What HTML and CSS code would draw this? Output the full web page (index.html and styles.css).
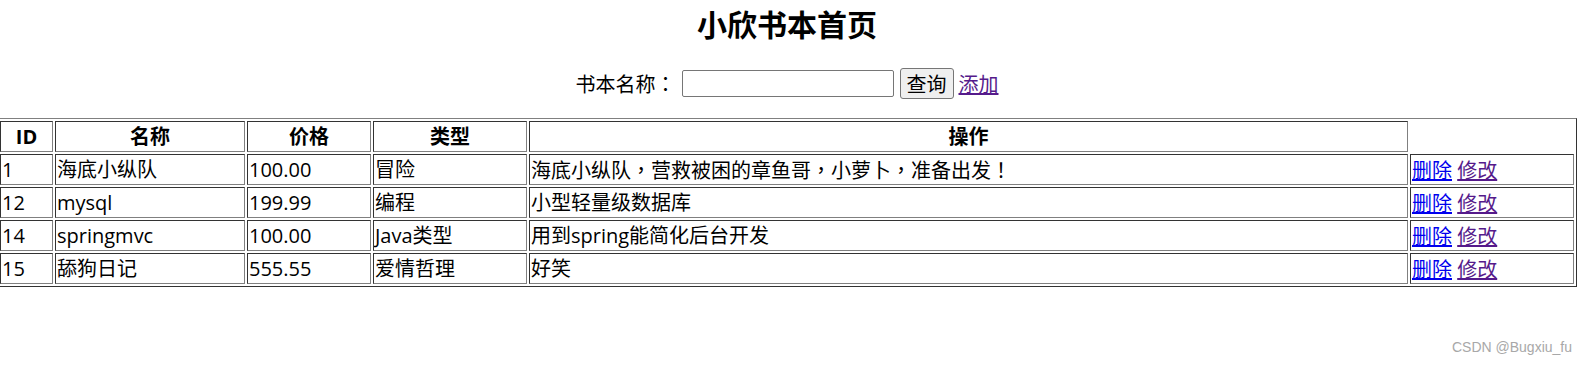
FILE: index.html
```html
<!DOCTYPE html>
<html lang="zh-CN">
<head>
<meta charset="utf-8">
<title>小欣书本首页</title>
<link rel="stylesheet" href="styles.css">
</head>
<body>
<div class="page">
  <h2 class="title">小欣书本首页</h2>
  <form class="search">
    <label class="search-label">书本名称<span class="punct" lang="zh-TW">：</span></label>
    <input class="search-input" type="text">
    <button class="search-btn" type="button">查询</button>
    <a class="link link-visited" href="#">添加</a>
  </form>
  <table class="books">
    <colgroup>
      <col class="c-id"><col class="c-name"><col class="c-price"><col class="c-type"><col class="c-desc"><col class="c-ops">
    </colgroup>
    <tr class="row">
      <th class="cell head">ID</th>
      <th class="cell head">名称</th>
      <th class="cell head">价格</th>
      <th class="cell head">类型</th>
      <th class="cell head">操作</th>
    </tr>
    <tr class="row">
      <td class="cell">1</td>
      <td class="cell">海底小纵队</td>
      <td class="cell">100.00</td>
      <td class="cell">冒险</td>
      <td class="cell">海底小纵队<span class="punct" lang="zh-TW">，</span>营救被困的章鱼哥<span class="punct" lang="zh-TW">，</span>小萝卜<span class="punct" lang="zh-TW">，</span>准备出发<span class="punct" lang="zh-TW">！</span></td>
      <td class="cell"><a class="link" href="#">删除</a> <a class="link link-visited" href="#">修改</a></td>
    </tr>
    <tr class="row">
      <td class="cell">12</td>
      <td class="cell">mysql</td>
      <td class="cell">199.99</td>
      <td class="cell">编程</td>
      <td class="cell">小型轻量级数据库</td>
      <td class="cell"><a class="link" href="#">删除</a> <a class="link link-visited" href="#">修改</a></td>
    </tr>
    <tr class="row">
      <td class="cell">14</td>
      <td class="cell">springmvc</td>
      <td class="cell">100.00</td>
      <td class="cell">Java类型</td>
      <td class="cell">用到spring能简化后台开发</td>
      <td class="cell"><a class="link" href="#">删除</a> <a class="link link-visited" href="#">修改</a></td>
    </tr>
    <tr class="row">
      <td class="cell">15</td>
      <td class="cell">舔狗日记</td>
      <td class="cell">555.55</td>
      <td class="cell">爱情哲理</td>
      <td class="cell">好笑</td>
      <td class="cell"><a class="link" href="#">删除</a> <a class="link link-visited" href="#">修改</a></td>
    </tr>
  </table>
</div>
<div class="watermark">CSDN @Bugxiu_fu</div>
</body>
</html>
```

FILE: styles.css
```css
html, body {
  margin: 0;
  padding: 0;
  background: #fff;
}
body {
  font-family: "Open Sans", "Noto Sans CJK SC", sans-serif;
  font-size: 20px;
  color: #000;
  overflow: hidden;
  height: 365px;
  position: relative;
}
.page {
  width: 1580px;
  margin-left: -3px;
}
.punct {
  font-family: "Noto Sans CJK TC", sans-serif;
}
.title {
  margin: 3px 0 0;
  font-size: 30px;
  line-height: 40px;
  font-weight: bold;
  text-align: center;
  font-family: "Noto Sans CJK SC", sans-serif;
}
.search {
  display: flex;
  justify-content: center;
  align-items: center;
  margin: 25px 0 0;
  height: 31px;
}
.search-label {
  width: 100px;
  line-height: 25px;
  white-space: nowrap;
  font-family: "Noto Sans CJK SC", sans-serif;
}
.search-label .punct {
  font-family: "Noto Sans CJK TC", sans-serif;
}
.search-input {
  box-sizing: border-box;
  width: 212px;
  height: 27px;
  margin: 0 0 0 6px;
  padding: 1px 2px;
  border: 1px solid #767676;
  border-radius: 2px;
  font-size: 17px;
  background: #fff;
}
.search-btn {
  box-sizing: border-box;
  width: 54px;
  height: 31px;
  margin: 0 0 0 6px;
  padding: 0;
  border: 1px solid #767676;
  border-radius: 3px;
  background: #efefef;
  font-family: "Noto Sans CJK SC", sans-serif;
  font-size: 20px;
  line-height: 25px;
  color: #000;
}
.search .link {
  margin-left: 5px;
  line-height: 25px;
}
.link {
  color: #0000ee;
  text-decoration: underline;
  font-family: "Noto Sans CJK SC", sans-serif;
}
.link-visited {
  color: #551a8b;
}
.books {
  margin-top: 19px;
  width: 1580px;
  table-layout: fixed;
  border-collapse: separate;
  border-spacing: 2px 2.25px;
  border: 1px solid;
  border-color: #808080 #333 #333 #808080;
}
.c-id { width: 53px; }
.c-name { width: 190px; }
.c-price { width: 124px; }
.c-type { width: 154px; }
.c-desc { width: 879px; }
.c-ops { width: 164px; }
.row {
  height: 31px;
}
.cell {
  padding: 1px;
  border: 1px solid;
  border-color: #333 #808080 #808080 #333;
  line-height: 25px;
  text-align: left;
  vertical-align: middle;
  white-space: nowrap;
  overflow: hidden;
}
.head {
  text-align: center;
  font-weight: bold;
}
.watermark {
  position: absolute;
  right: 15px;
  top: 339px;
  font-family: "Liberation Sans", Arial, sans-serif;
  font-size: 14px;
  line-height: 16px;
  color: #a8a8a8;
}
```
